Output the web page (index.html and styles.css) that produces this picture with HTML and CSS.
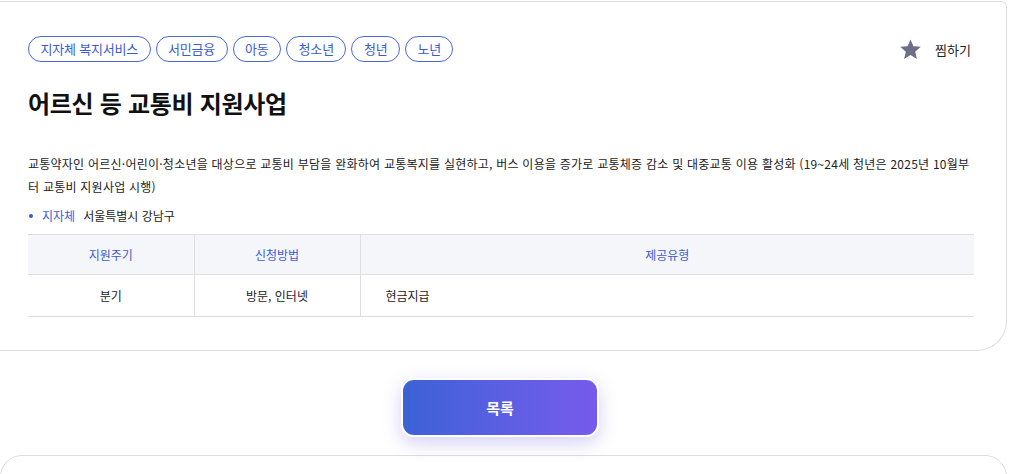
FILE: index.html
```html
<!DOCTYPE html>
<html lang="ko">
<head>
<meta charset="utf-8">
<link rel="stylesheet" href="styles.css">
</head>
<body>
<div class="page">
  <section class="card detail">
    <div class="top-row">
      <ul class="tags">
        <li class="tag">지자체 복지서비스</li>
        <li class="tag">서민금융</li>
        <li class="tag">아동</li>
        <li class="tag">청소년</li>
        <li class="tag">청년</li>
        <li class="tag">노년</li>
      </ul>
      <button class="fav" type="button">
        <svg class="star" width="23" height="23" viewBox="0 0 24 24"><path d="M12 1.6l3.05 7.05 7.65.6-5.8 5.05 1.8 7.5L12 17.8l-6.7 4 1.8-7.5-5.8-5.05 7.65-.6z" fill="#6c6f86"/></svg>
        <span>찜하기</span>
      </button>
    </div>
    <h1 class="title">어르신 등 교통비 지원사업</h1>
    <p class="desc">교통약자인 어르신·어린이·청소년을 대상으로 교통비 부담을 완화하여 교통복지를 실현하고, 버스 이용을 증가로 교통체증 감소 및 대중교통 이용 활성화 (19~24세 청년은 2025년 10월부터 교통비 지원사업 시행)</p>
    <div class="meta"><span class="dot"></span><span class="meta-key">지자체</span><span class="meta-val">서울특별시 강남구</span></div>
    <table class="info">
      <thead>
        <tr><th class="c1">지원주기</th><th class="c2">신청방법</th><th class="c3">제공유형</th></tr>
      </thead>
      <tbody>
        <tr><td class="c1">분기</td><td class="c2">방문, 인터넷</td><td class="c3 left">현금지급</td></tr>
      </tbody>
    </table>
  </section>
  <div class="actions">
    <button class="list-btn" type="button">목록</button>
  </div>
  <section class="card next"></section>
</div>
</body>
</html>
```
FILE: styles.css
```css
* { box-sizing: border-box; }
html, body { margin: 0; padding: 0; background: #fff; }
body {
  font-family: "Noto Sans CJK KR", "Noto Sans", sans-serif;
  color: #222;
  overflow: hidden;
}
.page { width: 1007px; }
.card {
  background: #fff;
  border: 1px solid #dedede;
}
.detail {
  margin-top: 1px;
  border-left: none;
  border-radius: 0 6px 30px 0;
  padding: 34px 32px 33px 28px;
}
.top-row {
  display: flex;
  justify-content: space-between;
  align-items: center;
}
.tags {
  display: flex;
  gap: 5px;
  list-style: none;
  margin: 0;
  padding: 0;
}
.tag {
  height: 26px;
  line-height: 24px;
  border: 1px solid #4a68d8;
  border-radius: 13px;
  padding: 0 11.5px;
  font-size: 13px;
  color: #3b5bd6;
  letter-spacing: -0.2px;
}
.fav {
  display: flex;
  align-items: center;
  gap: 13px;
  background: none;
  border: none;
  padding: 0;
  margin-right: 3px;
  font-family: inherit;
  font-size: 13px;
  color: #222;
  cursor: pointer;
}
.star { display: block; }
.title {
  margin: 25px 0 0;
  font-size: 24px;
  font-weight: 700;
  line-height: 32px;
  color: #111;
  letter-spacing: -0.3px;
}
.desc {
  margin: 33px 0 0;
  font-size: 12px;
  line-height: 23px;
  color: #222;
  letter-spacing: 0.24px;
}
.meta {
  display: flex;
  align-items: center;
  margin-top: 9px;
  font-size: 12px;
  line-height: 18px;
}
.dot {
  width: 4px;
  height: 4px;
  border-radius: 50%;
  background: #3b5bd6;
  margin: 0 9px 0 1px;
}
.meta-key { color: #3b5bd6; margin-right: 8px; }
.meta-val { color: #222; }
.info {
  width: 100%;
  margin-top: 9px;
  border-collapse: collapse;
  font-size: 12px;
}
.info th, .info td {
  border-top: 1px solid #dedede;
  border-bottom: 1px solid #dedede;
  text-align: center;
  font-weight: 400;
}
.info th + th, .info td + td { border-left: 1px solid #dedede; }
.info th {
  background: #f5f6fa;
  color: #3b5bd6;
  height: 40px;
}
.info td {
  height: 42px;
  color: #222;
}
.info .c1 { width: 166px; }
.info .c2 { width: 166px; }
.info td.left { text-align: left; padding-left: 25px; }
.actions {
  display: flex;
  justify-content: center;
  width: 1000px;
  padding: 27px 0 18px;
}
.list-btn {
  width: 198px;
  height: 59px;
  border: 2px solid #fff;
  border-radius: 13px;
  background: linear-gradient(90deg, #3b62d6 0%, #5b5fe2 50%, #775bec 100%);
  box-shadow: 0 6px 18px rgba(100, 90, 220, 0.28);
  color: #fff;
  font-family: inherit;
  font-size: 15px;
  font-weight: 700;
  cursor: pointer;
}
.next {
  height: 60px;
  border-radius: 22px 22px 0 0;
}
```
